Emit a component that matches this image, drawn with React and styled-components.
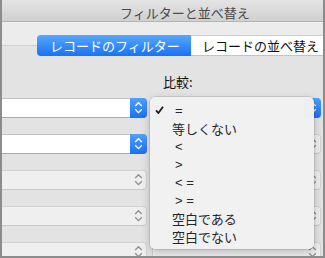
import React from "react";
import styled, { createGlobalStyle } from "styled-components";

const Global = createGlobalStyle`
  html, body { margin: 0; padding: 0; background: #e3e3e3; }
  body { font-family: "Noto Sans CJK JP", "Noto Sans", sans-serif; }
`;

const Window = styled.div`
  position: relative;
  width: 325px;
  height: 258px;
  box-sizing: border-box;
  border: 2px solid #8c8c8c;
  border-top: none;
  overflow: hidden;
  background: #e3e3e3;
  display: flex;
  flex-direction: column;
`;

const TitleBar = styled.div`
  height: 22px;
  box-sizing: border-box;
  padding: 3px 0 0 118px;
  display: flex;
  align-items: center;
  background: linear-gradient(#e4e4e4, #d0d0d0);
  border-bottom: 1px solid #b4b4b4;
  font-size: 13px;
  color: #4b4b4b;
  white-space: nowrap;
`;

const TabRow = styled.div`
  height: 35px;
  box-sizing: border-box;
  padding: 13px 0 0 35px;
  display: flex;
  background: linear-gradient(
    to bottom,
    #ececec 0,
    #ececec 23px,
    #d2d2d2 23px,
    #d2d2d2 24px,
    #e3e3e3 24px
  );
`;

const Segment = styled.div`
  height: 21px;
  box-sizing: border-box;
  display: flex;
  align-items: center;
  font-size: 13px;
  white-space: nowrap;
  ${(p) =>
    p.$active
      ? `
    width: 154px;
    flex: none;
    padding-left: 13px;
    color: #fff;
    border-radius: 4px 0 0 4px;
    background: linear-gradient(#57a7fd, #1a72f6);
  `
      : `
    flex: 1;
    padding-left: 11px;
    color: #111;
    background: #fff;
    border-top: 1px solid #d0d0d0;
    border-bottom: 1px solid #c4c4c4;
  `}
`;

const Content = styled.div`
  display: flex;
  flex-direction: column;
  padding-right: 2px;
`;

const LabelRow = styled.div`
  height: 42px;
  box-sizing: border-box;
  display: grid;
  grid-template-columns: 145px 1fr;
  column-gap: 5px;
  align-items: end;
  padding-bottom: 6px;
`;

const Label = styled.div`
  grid-column: 2;
  padding-left: 11px;
  font-size: 13px;
  line-height: 20px;
  color: #111;
`;

const Rows = styled.div`
  display: flex;
  flex-direction: column;
  gap: 16px;
`;

const Row = styled.div`
  display: grid;
  grid-template-columns: 145px 1fr;
  column-gap: 5px;
`;

const Select = styled.div`
  height: 20px;
  box-sizing: border-box;
  display: flex;
  justify-content: flex-end;
  border-radius: 4px;
  ${(p) => (p.$cut ? "margin-left: -8px;" : "")}
  ${(p) =>
    p.$disabled
      ? `
    background: #efefef;
    border: 1px solid #d3d3d3;
    border-bottom-color: #c9c9c9;
  `
      : `
    background: #fff;
    border: 1px solid #c2c2c2;
    border-bottom-color: #a9a9a9;
  `}
`;

const Stepper = styled.div`
  width: 17px;
  height: 20px;
  margin: -1px -1px -1px 0;
  flex: none;
  border-radius: 0 4px 4px 0;
  display: flex;
  align-items: center;
  justify-content: center;
  background: ${(p) =>
    p.$disabled ? "transparent" : "linear-gradient(#4fa2fd, #1a70f5)"};
  color: ${(p) => (p.$disabled ? "#8e8e8e" : "#fff")};
`;

const Chevrons = () => (
  <svg width="17" height="20" viewBox="0 0 17 20">
    <polyline
      points="5.2,8 8.5,4.7 11.8,8"
      fill="none"
      stroke="currentColor"
      strokeWidth="1.3"
    />
    <polyline
      points="5.2,11.3 8.5,14.6 11.8,11.3"
      fill="none"
      stroke="currentColor"
      strokeWidth="1.3"
    />
  </svg>
);

const PopupSelect = ({ disabled, cut }) => (
  <Select $disabled={disabled} $cut={cut}>
    <Stepper $disabled={disabled}>
      <Chevrons />
    </Stepper>
  </Select>
);

const Menu = styled.div`
  position: absolute;
  left: 148px;
  top: 97px;
  width: 164px;
  box-sizing: border-box;
  padding: 4px 0;
  border-radius: 5px;
  background: rgba(241, 241, 241, 0.98);
  box-shadow: 0 0 0 0.5px rgba(0, 0, 0, 0.18), 0 3px 10px rgba(0, 0, 0, 0.22);
`;

const Item = styled.div`
  position: relative;
  height: 18px;
  display: flex;
  align-items: center;
  padding-left: ${(p) => (p.$symbol ? "25px" : "22px")};
  font-family: ${(p) =>
    p.$symbol
      ? '"Liberation Sans", Arial, sans-serif'
      : '"Noto Sans CJK JP", sans-serif'};
  font-size: 13px;
  color: #262626;
  white-space: pre;
`;

const Check = styled.svg`
  position: absolute;
  left: 5px;
  top: 5px;
`;

const items = [
  { t: "=", s: true },
  { t: "等しくない" },
  { t: "<", s: true },
  { t: ">", s: true },
  { t: "< =", s: true },
  { t: "> =", s: true },
  { t: "空白である" },
  { t: "空白でない" },
];

export default function App() {
  return (
    <>
      <Global />
      <Window>
        <TitleBar>フィルターと並べ替え</TitleBar>
        <TabRow>
          <Segment $active>レコードのフィルター</Segment>
          <Segment>レコードの並べ替え</Segment>
        </TabRow>
        <Content>
          <LabelRow>
            <Label>比較:</Label>
          </LabelRow>
          <Rows>
            {[false, false, true, true, true].map((dis, i) => (
              <Row key={i}>
                <PopupSelect cut disabled={dis} />
                <PopupSelect disabled={i !== 0} />
              </Row>
            ))}
          </Rows>
        </Content>
        <Menu>
          {items.map((it, i) => (
            <Item key={i} $symbol={it.s}>
              {i === 0 && (
                <Check width="9" height="8" viewBox="0 0 9 8">
                  <path
                    d="M1 4.3 L3.4 7 L8 0.8"
                    fill="none"
                    stroke="#1e1e1e"
                    strokeWidth="1.8"
                  />
                </Check>
              )}
              {it.t}
            </Item>
          ))}
        </Menu>
      </Window>
    </>
  );
}
